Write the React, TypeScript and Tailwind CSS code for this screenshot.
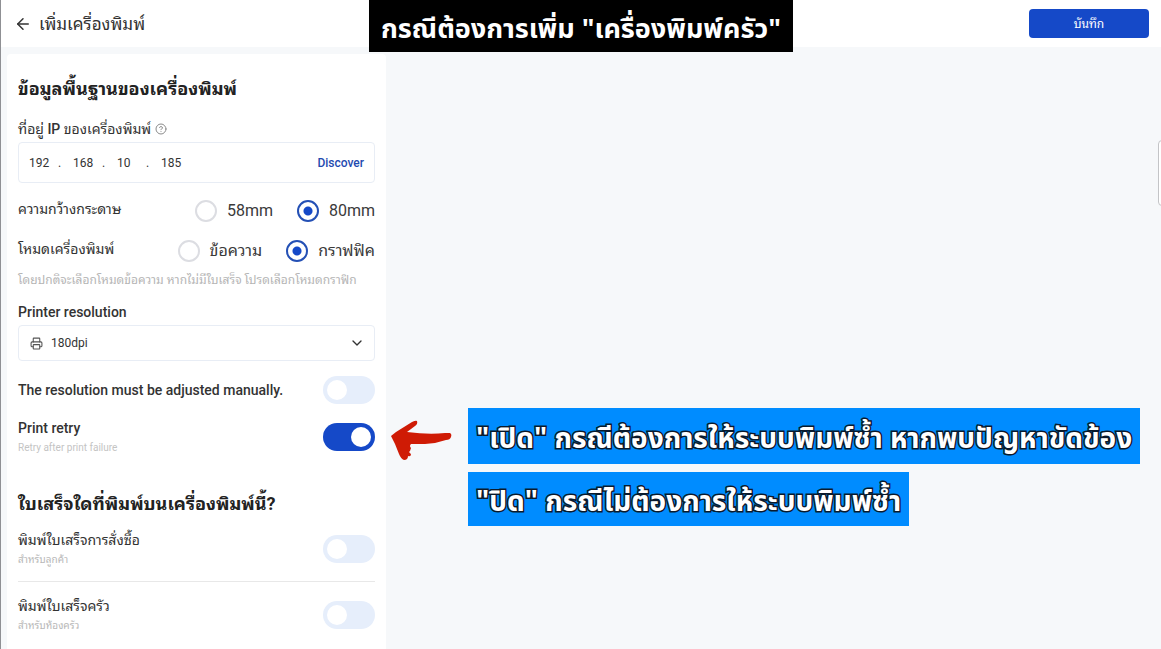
import { useState } from "react"
import { ArrowLeft, ChevronDown, CircleHelp, Printer } from "lucide-react"

type SwitchProps = {
  id: string
  label: string
  on?: boolean
}

const Switch = ({ id, label, on = false }: SwitchProps) => {
  const [checked, setChecked] = useState(on)
  return (
    <label htmlFor={id} className="relative block h-7 w-[52px] shrink-0 cursor-pointer">
      <input
        id={id}
        type="checkbox"
        role="switch"
        aria-label={label}
        checked={checked}
        onChange={(e) => setChecked(e.target.checked)}
        className="peer block h-7 w-[52px] appearance-none rounded-full bg-[#e6eefb] checked:bg-[#1549c8]"
      />
      <span className="pointer-events-none absolute left-1 top-1 size-5 rounded-full bg-white peer-checked:left-7" />
    </label>
  )
}

type RadioProps = {
  name: string
  label: string
  checked?: boolean
}

const Radio = ({ name, label, checked }: RadioProps) => (
  <label className="flex items-center gap-[10px] text-base leading-6 text-[#3a3a3a]">
    <input
      type="radio"
      name={name}
      defaultChecked={checked}
      className="size-[22px] appearance-none rounded-full border-2 border-[#dcdde2] bg-white checked:border-[#2450b5] checked:bg-[radial-gradient(circle,#1549c8_4px,white_5px)]"
    />
    {label}
  </label>
)

const ipParts = ["192", "168", "10", "185"]

const receipts = [
  { id: "order", title: "พิมพ์ใบเสร็จการสั่งซื้อ", note: "สำหรับลูกค้า" },
  { id: "kitchen", title: "พิมพ์ใบเสร็จครัว", note: "สำหรับห้องครัว" },
]

const strokes =
  "[-webkit-text-stroke:3px_#0b1a2c] [paint-order:stroke_fill] [stroke-linejoin:round]"

const App = () => {
  return (
    <div className="relative min-h-screen overflow-hidden border-l border-[#8f9094] bg-[#f6f8fa] font-[Roboto,'Noto_Sans_Thai_Looped',Loma,Garuda,Waree,'Noto_Serif_Thai','Noto_Sans_Thai',sans-serif] text-[#333]">
      <header className="flex h-[47px] items-center justify-between bg-white pl-[13px] pr-3">
        <div className="flex items-center gap-[7px]">
          <button type="button" aria-label="Back">
            <ArrowLeft className="size-[18px]" strokeWidth={2} />
          </button>
          <h1 className="text-[17px] leading-6">เพิ่มเครื่องพิมพ์</h1>
        </div>
        <button
          type="button"
          className="h-[29px] w-[120px] rounded bg-[#1549c8] text-xs text-white"
        >
          บันทึก
        </button>
      </header>

      <main className="flex items-start pl-[6px] pt-[7px]">
        <form className="w-[379px] shrink-0 rounded bg-white px-[11px] pb-[7px] pt-[23px]">
          <h2 className="text-lg font-bold leading-6 text-[#222]">ข้อมูลพื้นฐานของเครื่องพิมพ์</h2>

          <div className="mt-[18px] flex items-center gap-1 text-sm leading-5">
            <span id="ip-label">
              ที่อยู่ <b className="font-medium">IP</b> ของเครื่องพิมพ์
            </span>
            <CircleHelp className="size-3 text-[#8a8a8a]" strokeWidth={2} />
          </div>
          <div
            role="group"
            aria-labelledby="ip-label"
            className="mt-[3px] flex h-[41px] items-center rounded-sm border border-[#e8edf5] px-[10px] text-xs"
          >
            {ipParts.map((part, i) => (
              <div key={i} className="flex items-center">
                {i > 0 && <span className="w-[22px] pl-[7px]">.</span>}
                <input
                  aria-label={`IP ${i + 1}`}
                  defaultValue={part}
                  className="w-[22px] bg-transparent outline-none"
                />
              </div>
            ))}
            <button type="button" className="ml-auto font-medium text-[#1f4bb0]">
              Discover
            </button>
          </div>

          <fieldset className="mt-4 flex h-6 items-center">
            <legend className="float-left pb-1 text-sm leading-5">ความกว้างกระดาษ</legend>
            <div className="ml-auto flex gap-6">
              <Radio name="paper" label="58mm" />
              <Radio name="paper" label="80mm" checked />
            </div>
          </fieldset>
          <fieldset className="mt-4 flex h-6 items-center">
            <legend className="float-left pb-1 text-sm leading-5">โหมดเครื่องพิมพ์</legend>
            <div className="ml-auto flex gap-6">
              <Radio name="mode" label="ข้อความ" />
              <Radio name="mode" label="กราฟฟิค" checked />
            </div>
          </fieldset>
          <p className="mt-[7px] whitespace-nowrap text-xs leading-5 text-[#b5b5b5]">
            โดยปกติจะเลือกโหมดข้อความ หากไม่มีใบเสร็จ โปรดเลือกโหมดกราฟิก
          </p>

          <label htmlFor="dpi" className="mt-3 block text-sm font-medium leading-5">
            Printer resolution
          </label>
          <div className="relative mt-[3px]">
            <select
              id="dpi"
              className="h-9 w-full appearance-none rounded-sm border border-[#e8edf5] bg-transparent pl-8 text-xs"
            >
              <option>180dpi</option>
              <option>203dpi</option>
            </select>
            <Printer className="pointer-events-none absolute left-3 top-3 size-[13px] text-[#555]" />
            <ChevronDown className="pointer-events-none absolute right-[10px] top-[10px] size-4" />
          </div>

          <div className="mt-[15px] flex items-center justify-between">
            <span className="text-sm font-medium leading-5">
              The resolution must be adjusted manually.
            </span>
            <Switch id="manual" label="The resolution must be adjusted manually." />
          </div>

          <div className="mt-[14px] flex items-center justify-between">
            <div>
              <p className="text-sm font-medium leading-5">Print retry</p>
              <p className="mt-[2px] text-[10px] leading-4 text-[#c4c4c4]">Retry after print failure</p>
            </div>
            <Switch id="retry" label="Print retry" on />
          </div>

          <h2 className="mt-9 text-lg font-bold leading-6 text-[#222]">
            ใบเสร็จใดที่พิมพ์บนเครื่องพิมพ์นี้?
          </h2>
          <div className="mt-[14px] divide-y divide-[#e8e8e8]">
            {receipts.map((item) => (
              <div key={item.id} className="flex items-center justify-between pb-[13px] not-first:pt-[14px]">
                <div>
                  <p className="text-sm leading-5">{item.title}</p>
                  <p className="mt-[2px] text-[10px] leading-4 text-[#b8b8b8]">{item.note}</p>
                </div>
                <Switch id={item.id} label={item.title} />
              </div>
            ))}
          </div>
        </form>

        <aside className="flex items-start gap-4 pl-[5px] pt-[354px] font-['Noto_Sans_Thai','Noto_Sans',sans-serif] text-[28px] font-bold text-white">
          <svg viewBox="0 0 61 40" className="mt-3 h-10 w-[61px] shrink-0" fill="#cf1b05">
            <path d="M0 16 L5 12 L21 2 Q25 0 26 1 Q27 4 24 6 L16 12 Q38 15 54 13 L59 13 Q61 14 60 17 Q59 20 55 20 L44 23 L34 24 L20 24 Q18 26 20 28 L19 31 Q17 32 20 34 Q20 37 17 36 Q17 40 13 40 Q10 39 8 34 L4 24 Z" />
          </svg>
          <div className="flex flex-col items-start gap-2 whitespace-nowrap">
            <p className={`bg-[#008cff] px-2 pb-1 pt-3 leading-10 ${strokes}`}>
              "เปิด" กรณีต้องการให้ระบบพิมพ์ซ้ำ หากพบปัญหาขัดข้อง
            </p>
            <p className={`bg-[#008cff] px-2 pb-[3px] pt-[11px] leading-10 ${strokes}`}>
              "ปิด" กรณีไม่ต้องการให้ระบบพิมพ์ซ้ำ
            </p>
          </div>
        </aside>
      </main>

      {/* Caption over the header */}
      <p className="absolute left-1/2 top-0 h-[52px] -translate-x-1/2 whitespace-nowrap bg-black px-3 font-['Noto_Sans_Thai','Noto_Sans',sans-serif] text-[27px] font-bold leading-[60px] text-white">
        กรณีต้องการเพิ่ม "เครื่องพิมพ์ครัว"
      </p>

      {/* Edge handle */}
      <div className="absolute -right-1 top-[140px] h-[66px] w-[7px] rounded-l border border-[#c3c4c7] bg-white" />
    </div>
  )
}

export default App
